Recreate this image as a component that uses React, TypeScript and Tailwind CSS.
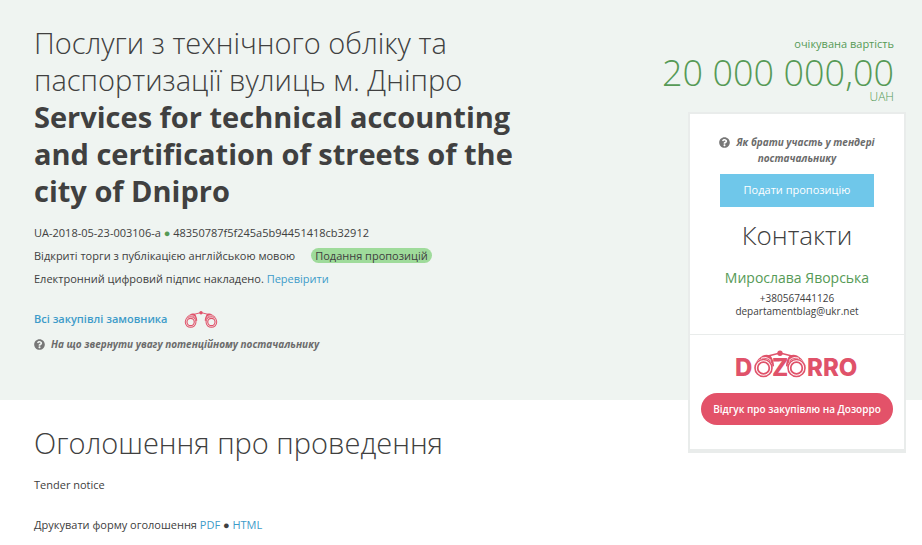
import { FaQuestionCircle } from 'react-icons/fa'

const tender = {
  title: 'Послуги з технічного обліку та паспортизації вулиць м. Дніпро',
  titleEn: 'Services for technical accounting and certification of streets of the city of Dnipro',
  number: 'UA-2018-05-23-003106-a',
  hash: '48350787f5f245a5b94451418cb32912',
  procedure: 'Відкриті торги з публікацією англійською мовою',
  status: 'Подання пропозицій',
  amount: '20 000 000,00',
  currency: 'UAH',
}

const contact = {
  name: 'Мирослава Яворська',
  phone: '+380567441126',
  email: 'departamentblag@ukr.net',
}

// Lenses, tubes and hinge, shared by the small icon and the wordmark
function BinocularShape({ bg }: { bg: string }) {
  return (
    <g>
      <path d="M1 13C3 9 6 6 9 4.5C12 3 16 3.5 17.5 6C19 9 20 12 20 15L12 20Z" fill="#e0526a" />
      <path d="M51 13C49 9 46 6 43 4.5C40 3 36 3.5 34.5 6C33 9 32 12 32 15L40 20Z" fill="#e0526a" />
      <path d="M7 7.5C10 5.5 14 6.5 17 9.5M45 7.5C42 5.5 38 6.5 35 9.5" fill="none" stroke={bg} strokeWidth="0.9" />
      <path d="M14 5L26 2L38 5" fill="none" stroke="#e0526a" strokeWidth="1.5" />
      <circle cx="26" cy="2.2" r="2.7" fill="#e0526a" />
      <circle cx="9.5" cy="17" r="9.4" fill={bg} />
      <circle cx="42.5" cy="17" r="9.4" fill={bg} />
      <circle cx="9.5" cy="17" r="8.5" fill="none" stroke="#e0526a" strokeWidth="1.6" />
      <circle cx="42.5" cy="17" r="8.5" fill="none" stroke="#e0526a" strokeWidth="1.6" />
      <circle cx="9.5" cy="17" r="5.8" fill="none" stroke="#e0526a" strokeWidth="1.8" />
      <circle cx="42.5" cy="17" r="5.8" fill="none" stroke="#e0526a" strokeWidth="1.8" />
    </g>
  )
}

function Binoculars() {
  return (
    <svg viewBox="-1 -2 54 30" className="w-[34px] h-[19px]" aria-hidden="true">
      <BinocularShape bg="#eff4f1" />
    </svg>
  )
}

function DozorroLogo() {
  return (
    <svg viewBox="-2 -4 126 38" className="w-[126px] h-[38px]" role="img" aria-label="Dozorro">
      <g transform="translate(18 0)">
        <BinocularShape bg="#ffffff" />
      </g>
      <g fill="#e0526a" className="font-['Inter'] text-[24px] font-extrabold">
        <text x="-1" y="25">D</text>
        <text x="36" y="25">Z</text>
        <text x="71" y="25">RRO</text>
      </g>
    </svg>
  )
}

function HelpLink({ children }: { children: string }) {
  return (
    <a href="#help" className="text-[10px] font-bold italic text-[#6b6b6b]">
      <FaQuestionCircle className="inline-block mr-1.5 -mt-0.5 text-[11px] text-[#777777]" />
      {children}
    </a>
  )
}

export default function App() {
  return (
    <div className="min-h-screen bg-white font-['Open_Sans','Noto_Sans',sans-serif] text-[11px] text-[#404040]">
      <header className="flex items-start justify-between bg-[#eff4f1] pl-[34px] pr-4">
        <div className="max-w-[520px] pt-6 pb-11">
          <h1 className="text-[29px] leading-[37px] font-light">
            {tender.title}
            <strong className="block font-bold">{tender.titleEn}</strong>
          </h1>

          <div className="mt-3 leading-[23px]">
            <p>
              {tender.number} <span className="text-[#569a56]">●</span> {tender.hash}
            </p>
            <p>
              {tender.procedure}
              <span className="ml-4 rounded-full bg-[#9fdb9b] px-1 leading-4">{tender.status}</span>
            </p>
            <p>
              Електронний цифровий підпис накладено.{' '}
              <a href="#signature" className="text-[#3d9bc9]">Перевірити</a>
            </p>
          </div>

          <div className="mt-[17px] flex items-center gap-4 leading-6">
            <a href="#customer" className="font-semibold text-[#3d9bc9]">Всі закупівлі замовника</a>
            <Binoculars />
          </div>
          <p className="mt-px leading-6"><HelpLink>На що звернути увагу потенційному постачальнику</HelpLink></p>
        </div>

        <aside className="flex flex-col items-end pt-9 -mb-14 shrink-0">
          <div className="pr-3 text-right text-[#569a56]">
            <p className="leading-4">очікувана вартість</p>
            <p className="text-[36px] leading-[42px] font-light whitespace-nowrap">{tender.amount}</p>
            <p className="text-xs leading-[6px] font-light">{tender.currency}</p>
          </div>

          <div className="mt-3 w-[218px] border-2 border-b-4 border-[#e9eceb] bg-white text-center">
            <p className="px-5 pt-5 leading-4">
              <HelpLink>Як брати участь у тендері постачальнику</HelpLink>
            </p>
            <div className="mt-2 px-[30px]">
              <button className="h-[33px] w-full bg-[#6fc7ea] text-white">Подати пропозицію</button>
            </div>
            <h2 className="mt-2.5 text-[26px] leading-9 font-light">Контакти</h2>
            <p className="mt-[15px] text-sm leading-5 text-[#569a56]">{contact.name}</p>
            <p className="mt-1 text-[10px] leading-[13px]">{contact.phone}</p>
            <p className="text-[10px] leading-[13px]">{contact.email}</p>
            <div className="mt-4 flex flex-col items-center border-t border-[#e9eceb] px-[11px] pt-3 pb-6">
              <DozorroLogo />
              <button className="mt-2 h-8 w-full rounded-full bg-[#e35269] text-[10px] font-semibold text-white">
                Відгук про закупівлю на Дозорро
              </button>
            </div>
          </div>
        </aside>
      </header>

      <main className="px-[34px] pt-6">
        <h2 className="text-[29px] leading-[37px] font-light">Оголошення про проведення</h2>
        <p className="mt-4 leading-4">Tender notice</p>
        <p className="mt-6 leading-4">
          Друкувати форму оголошення <a href="#pdf" className="text-[#3d9bc9]">PDF</a> ●{' '}
          <a href="#html" className="text-[#3d9bc9]">HTML</a>
        </p>
      </main>
    </div>
  )
}
